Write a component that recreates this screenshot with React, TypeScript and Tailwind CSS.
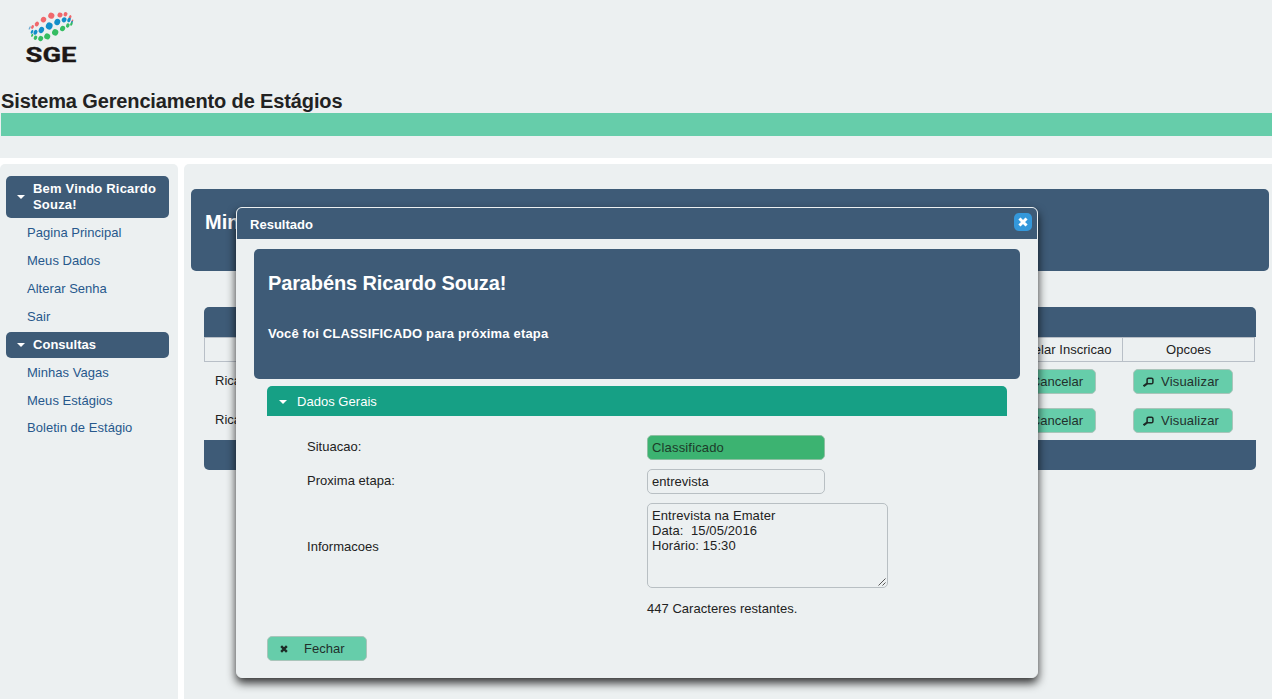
import type { ReactNode } from "react";

function Caret({ className = "" }: { className?: string }) {
  return (
    <svg className={`shrink-0 ${className}`} width="8" height="4" viewBox="0 0 8 4">
      <path d="M0 0H8L4 4Z" fill="#fff" />
    </svg>
  );
}

function Cross({ color, size }: { color: string; size: number }) {
  return (
    <svg className="shrink-0" width={size} height={size} viewBox="0 0 9 9">
      <path d="M1.3 1.3L7.7 7.7M7.7 1.3L1.3 7.7" stroke={color} strokeWidth="2.7" />
    </svg>
  );
}

function Search() {
  return (
    <svg className="shrink-0" width="11" height="10" viewBox="0 0 11 10">
      <rect x="4.1" y="1.2" width="5.8" height="5.6" rx="1.4" fill="none" stroke="#1d2a26" strokeWidth="1.5" />
      <path d="M4.4 6.4L0.6 9.2" stroke="#1d2a26" strokeWidth="2.1" />
    </svg>
  );
}

const dots: [number, number, number, number, string][] = [
  [60, 15, 2.5, 2.4, "#f0686c"],
  [51.3, 15.7, 3.1, 3, "#f0686c"],
  [43.5, 19.6, 2.7, 2.8, "#f0686c"],
  [36.9, 24, 2, 2.6, "#f0686c"],
  [32.5, 27, 1.3, 2, "#f0686c"],
  [65.5, 14.2, 1.9, 2.2, "#f0686c"],
  [70, 17.2, 1.3, 2.2, "#f0686c"],
  [72.3, 21, 0.8, 1.7, "#f0686c"],
  [29.7, 28, 0.7, 1.9, "#6aa9d0"],
  [49.2, 26, 3.3, 3.6, "#128fca"],
  [57.3, 22, 2.9, 3.2, "#128fca"],
  [41.4, 30, 2.6, 3.2, "#128fca"],
  [35.5, 32.3, 1.9, 2.6, "#128fca"],
  [32, 31.8, 1.1, 2.1, "#128fca"],
  [64.1, 19.8, 2.3, 2.6, "#128fca"],
  [69, 20, 1.6, 2.4, "#128fca"],
  [71.8, 22.4, 0.8, 1.7, "#128fca"],
  [55.2, 32.4, 3.1, 3.2, "#35bd62"],
  [62.6, 28.5, 2.5, 2.8, "#35bd62"],
  [47.2, 36.4, 3, 3, "#35bd62"],
  [40.7, 38.6, 2.4, 2.7, "#35bd62"],
  [35.5, 37.7, 1.7, 2.2, "#35bd62"],
  [32.2, 35.4, 1, 1.6, "#35bd62"],
  [67.8, 25.5, 1.7, 2.2, "#35bd62"],
  [71.4, 24, 1.1, 1.8, "#35bd62"],
];

function Logo() {
  return (
    <svg className="block" width="90" height="90" viewBox="0 0 90 90">
      {dots.map(([x, y, rx, ry, color]) => (
        <ellipse key={`${x}-${y}`} cx={x} cy={y} rx={rx} ry={ry} fill={color} transform={`rotate(25 ${x} ${y})`} />
      ))}
      <text
        x="25.5"
        y="62"
        textLength="51"
        lengthAdjust="spacingAndGlyphs"
        fill="#1c1717"
        stroke="#1c1717"
        strokeWidth="0.3"
        className="font-[Roboto,sans-serif] text-[19.5px] font-bold"
      >
        SGE
      </text>
    </svg>
  );
}

function MenuTitle({ children, className }: { children: ReactNode; className: string }) {
  return (
    <div className={`flex items-center rounded-[5px] bg-[#3e5b77] pl-[11px] font-bold leading-4 text-white ${className}`}>
      <Caret />
      <span className="pl-2">{children}</span>
    </div>
  );
}

function MenuLink({ children }: { children: ReactNode }) {
  return <a className="flex h-[27.8px] items-center pl-[21px] text-[#27588c]">{children}</a>;
}

function Button({ icon, children, className }: { icon?: ReactNode; children: ReactNode; className: string }) {
  return (
    <button className={`flex h-[25px] items-center rounded-[5px] border border-[#a9c5ba] bg-[#66cdaa] text-[#22302c] ${className}`}>
      {icon}
      {children}
    </button>
  );
}

function Row() {
  return (
    <div className="flex h-[39px] items-center">
      <div className="w-[788px] pb-0.5 pl-[11px]">Ricardo Souza</div>
      <div className="w-[130px] pl-[11px]">
        <Button className="w-[93px] justify-end pr-3">Cancelar</Button>
      </div>
      <div className="pl-[11px]">
        <Button icon={<Search />} className="w-[100px] gap-[7px] pl-[9px] tracking-[0.2px]">
          Visualizar
        </Button>
      </div>
    </div>
  );
}

function Dialog() {
  return (
    <section className="absolute left-[236px] top-[207px] h-[471px] w-[802px] rounded-md border border-[#ecf0f1] bg-[#ecf0f1] shadow-[0_5px_10px_rgba(0,0,0,0.8)]">
      <header className="flex h-[31px] items-center justify-between rounded-t-[5px] bg-[#3e5b77] pl-[13px] pr-[5px] font-bold text-white">
        <span className="pt-0.5 tracking-[0.02px]">Resultado</span>
        <span className="mb-[3px] flex size-[18px] items-center justify-center rounded-[5px] bg-[#3498db]">
          <Cross color="#fff" size={10} />
        </span>
      </header>
      <div className="mx-[17px] mt-[10px] h-[130px] rounded-[5px] bg-[#3e5b77] pl-[14px] pt-[22px] font-bold text-white">
        <h2 className="text-[20px] leading-6 tracking-[-0.13px]">Parabéns Ricardo Souza!</h2>
        <p className="mt-[31px] leading-4 tracking-[0.17px]">Você foi CLASSIFICADO para próxima etapa</p>
      </div>
      <div className="mx-[30px] mt-[7px] flex h-[30px] items-center rounded-t-[5px] bg-[#16a085] pl-3 text-white">
        <Caret className="mt-0.5" />
        <span className="pl-[10px] pt-0.5">Dados Gerais</span>
      </div>
      <div className="ml-[70px] mt-[19px] grid grid-cols-[340px_241px] items-center">
        <span className="pb-0.5">Situacao:</span>
        <div className="flex h-[25px] w-[178px] items-center rounded-[5px] border border-[#8ebfa2] bg-[#3cb371] pl-1 tracking-[0.16px] text-[#1c3b29]">
          Classificado
        </div>
        <span className="mt-[7px]">Proxima etapa:</span>
        <div className="mt-[9px] flex h-[25px] w-[178px] items-center rounded-[5px] border border-[#b8bfc3] pl-1">entrevista</div>
        <span className="mt-[11px]">Informacoes</span>
        <div className="relative mt-[9px] h-[85px] whitespace-pre rounded-[5px] border border-[#b8bfc3] pl-1 pt-1 leading-[15px] tracking-[0.1px]">
          {"Entrevista na Emater\nData:  15/05/2016\nHorário: 15:30"}
          <svg className="absolute bottom-px right-px" width="8" height="8" viewBox="0 0 8 8">
            <path d="M0.5 7.5L7.5 0.5M4.5 7.5L7.5 4.5" stroke="#555" />
          </svg>
        </div>
        <span />
        <span className="mt-3 leading-[18px]">447 Caracteres restantes.</span>
      </div>
      <Button icon={<Cross color="#1d2a26" size={8} />} className="ml-[30px] mt-[18px] w-[100px] gap-4 pl-3">
        Fechar
      </Button>
    </section>
  );
}

export default function App() {
  return (
    <div className="relative h-[699px] w-[1279px] overflow-hidden bg-white font-['Liberation_Sans',Arial,sans-serif] text-[13px] tracking-[0.03px] text-[#222]">
      <header className="h-[158px] w-[1272px] bg-[#ecf0f1]">
        <Logo />
        <h1 className="h-[23px] pl-px text-[20px] font-bold leading-[23px] tracking-[-0.13px]">Sistema Gerenciamento de Estágios</h1>
        <div className="ml-px h-[23px] bg-[#66cdaa]" />
      </header>
      <div className="mt-1.5 flex h-[535px] w-[1272px] gap-1.5">
        <nav className="w-[178px] rounded-t-[5px] bg-[#ecf0f1] pl-1.5 pr-[9px] pt-3">
          <MenuTitle className="h-[42px] tracking-[0.2px]">Bem Vindo Ricardo Souza!</MenuTitle>
          <div className="h-[114px] pt-px">
            <MenuLink>Pagina Principal</MenuLink>
            <MenuLink>Meus Dados</MenuLink>
            <MenuLink>Alterar Senha</MenuLink>
            <MenuLink>Sair</MenuLink>
          </div>
          <MenuTitle className="h-[26px]">Consultas</MenuTitle>
          <div className="pt-[0.6px]">
            <MenuLink>Minhas Vagas</MenuLink>
            <MenuLink>Meus Estágios</MenuLink>
            <MenuLink>Boletin de Estágio</MenuLink>
          </div>
        </nav>
        <main className="w-[1088px] rounded-tl-[5px] bg-[#ecf0f1] pl-[7px] pr-[3px] pt-[25px]">
          <div className="h-[82px] rounded-[5px] bg-[#3e5b77] pl-[14px] pt-[21px] text-[20px] font-bold leading-6 text-white">Minhas Vagas</div>
          <div className="ml-[13px] mt-9 w-[1052px]">
            <div className="h-[30px] rounded-t-[5px] bg-[#3e5b77]" />
            <div className="flex h-[25px] w-[1051px] border border-[#b8bfc7]">
              <div className="w-[788px]" />
              <div className="flex w-[130px] items-center justify-center border-r border-[#b8bfc7]">Cancelar Inscricao</div>
              <div className="flex flex-1 items-center justify-center">Opcoes</div>
            </div>
            <Row />
            <Row />
            <div className="h-[30px] rounded-b-[5px] bg-[#3e5b77]" />
          </div>
        </main>
      </div>
      <Dialog />
    </div>
  );
}
